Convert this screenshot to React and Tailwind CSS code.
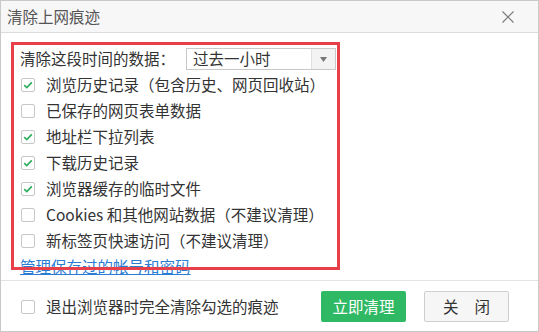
const items = [
  { label: "浏览历史记录（包含历史、网页回收站）", checked: true },
  { label: "已保存的网页表单数据", checked: false },
  { label: "地址栏下拉列表", checked: true },
  { label: "下载历史记录", checked: true },
  { label: "浏览器缓存的临时文件", checked: true },
  { label: "Cookies 和其他网站数据（不建议清理）", checked: false },
  { label: "新标签页快速访问（不建议清理）", checked: false },
];

function Box({ checked }) {
  return (
    <span className="w-[14px] h-[14px] border border-[#c8c8c8] rounded-[2px] bg-white flex items-center justify-center shrink-0">
      {checked && (
        <svg width="10" height="8" viewBox="0 0 10 8">
          <path d="M1.2 4.2 L3.8 6.6 L8.8 1.4" fill="none" stroke="#2fae5f" strokeWidth="1.7" />
        </svg>
      )}
    </span>
  );
}

export default function App() {
  return (
    <div
      className="w-[539px] h-[332px] bg-white border border-[#c9c9c9] flex flex-col text-[#333] overflow-hidden"
      style={{ fontFamily: '"Microsoft YaHei", "Noto Sans CJK SC", sans-serif' }}
    >
      {/* HEADER */}
      <div className="h-[32px] shrink-0 bg-[#f7f7f7] border-b border-[#dcdcdc] flex items-center justify-between pl-[6px] pr-[24px]">
        <span className="text-[15.5px] text-[#555]">清除上网痕迹</span>
        <svg width="12" height="12" viewBox="0 0 12 12">
          <path d="M0.5 0.5 L11.5 11.5 M11.5 0.5 L0.5 11.5" stroke="#777" strokeWidth="1.1" />
        </svg>
      </div>

      {/* BODY */}
      <div className="relative flex-1 flex flex-col pt-[13px] pl-[19px]">
        <div className="h-[26px] flex items-center text-[15.5px]">
          <span className="w-[166px]">清除这段时间的数据：</span>
          <div className="w-[150px] h-[22px] border border-[#c8c8c8] flex items-center justify-between bg-white">
            <span className="pl-[6px] text-[15.5px] leading-none">过去一小时</span>
            <span className="w-[24px] h-full bg-[#f3f3f3] border-l border-[#e0e0e0] flex items-center justify-center">
              <svg width="7" height="5" viewBox="0 0 7 5">
                <path d="M0 0 L7 0 L3.5 5 Z" fill="#777" />
              </svg>
            </span>
          </div>
        </div>

        {items.map((it) => (
          <div key={it.label} className="h-[26px] flex items-center gap-[11px] pl-[1px] text-[15.5px]">
            <Box checked={it.checked} />
            <span>{it.label}</span>
          </div>
        ))}

        <div className="h-[26px] flex items-center">
          <a href="#" className="text-[15.5px] text-[#2b7cd3] underline">管理保存过的帐号和密码</a>
        </div>

        {/* red highlight */}
        <div className="absolute left-[10px] top-[9px] w-[329px] h-[228px] border-[3px] border-[#e8404a] pointer-events-none"></div>
      </div>

      {/* FOOTER */}
      <div className="h-[52px] shrink-0 border-t border-[#e3e3e3] flex items-center justify-between pl-[20px] pr-[29px]">
        <div className="flex items-center gap-[11px] text-[15.5px]">
          <Box checked={false} />
          <span>退出浏览器时完全清除勾选的痕迹</span>
        </div>
        <div className="flex items-center gap-[18px]">
          <button className="w-[85px] h-[31px] bg-[#2fb964] rounded-[2px] text-white text-[15.5px]">立即清理</button>
          <button className="w-[85px] h-[31px] bg-[#f6f6f6] border border-[#cfcfcf] rounded-[2px] text-[#333] text-[15.5px] flex items-center justify-center gap-[16px]">
            <span>关</span>
            <span>闭</span>
          </button>
        </div>
      </div>
    </div>
  );
}
